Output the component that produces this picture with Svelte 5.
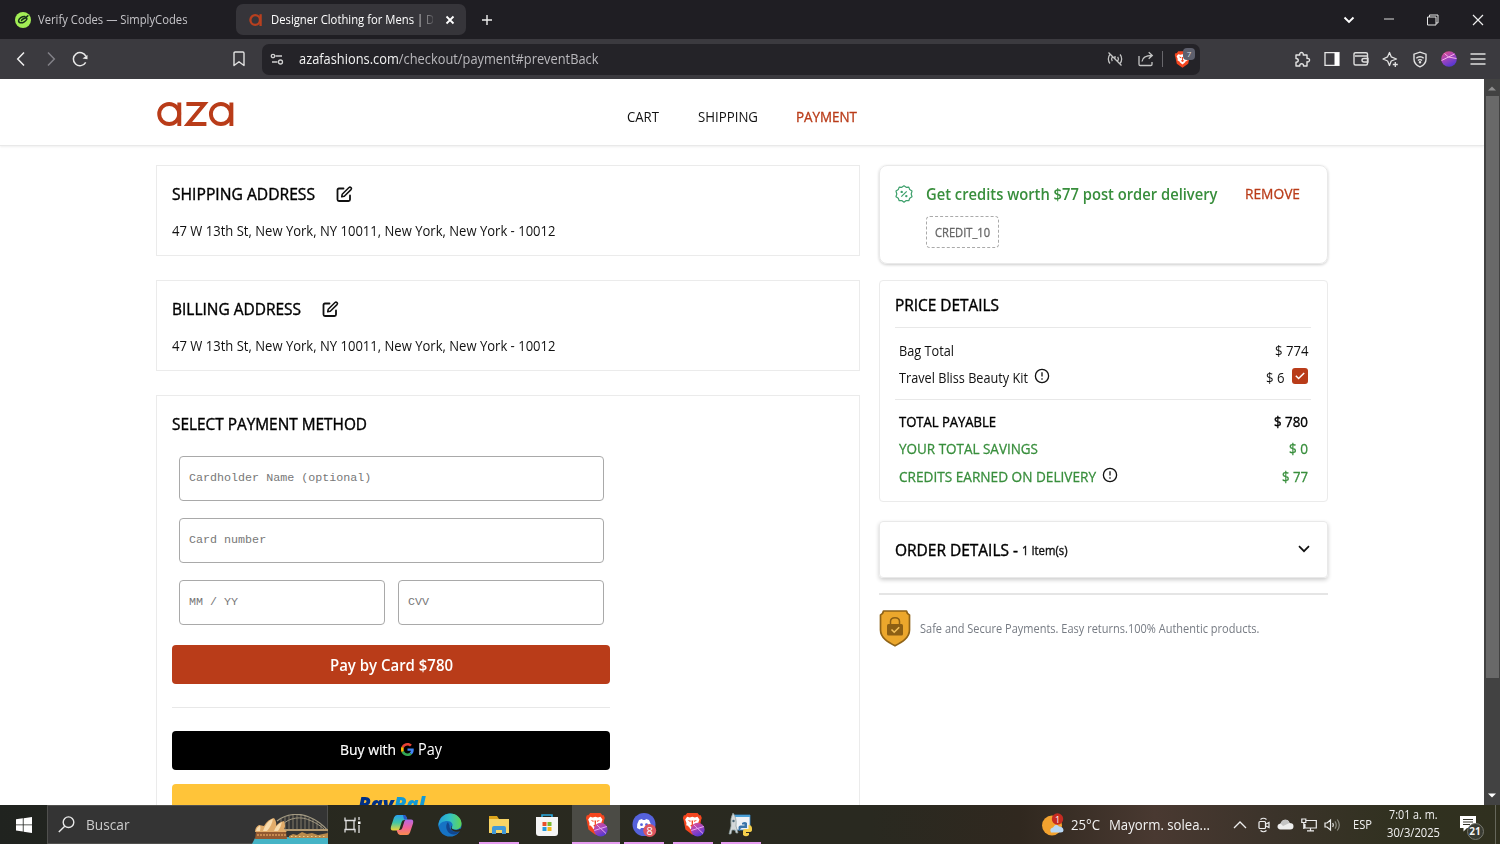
<script>
  // Condenses a label horizontally so that it takes exactly the given width.
  function fit(node, width) {
    node.style.display = 'inline-block';
    const natural = node.getBoundingClientRect().width;
    node.style.width = `${width}px`;
    node.style.transform = `scaleX(${width / natural})`;
  }

  const address = '47 W 13th St, New York, NY 10011, New York, New York - 10012';
  const addresses = [
    { title: 'SHIPPING ADDRESS', width: 143 },
    { title: 'BILLING ADDRESS', width: 129 }
  ];
  const steps = [
    { label: 'CART', width: 32, active: false },
    { label: 'SHIPPING', width: 60, active: false },
    { label: 'PAYMENT', width: 61, active: true }
  ];
  const totals = [
    { label: 'TOTAL PAYABLE', width: 97, value: '$ 780', vw: 34, green: false, info: false },
    { label: 'YOUR TOTAL SAVINGS', width: 139, value: '$ 0', vw: 19, green: true, info: false },
    { label: 'CREDITS EARNED ON DELIVERY', width: 197, value: '$ 77', vw: 26, green: true, info: true }
  ];
</script>

{#snippet info()}
  <svg class="info" width="16" height="16" viewBox="0 0 16 16" fill="none" stroke="#111" stroke-width="1.300">
    <circle cx="8" cy="8" r="6.600" /><path d="M8 4.300v4.300M8 10.200v1.500" />
  </svg>
{/snippet}

{#snippet lion()}
  <path d="M6 1h12l2.200 2.500 1.600-.2 1.200 3-.8 2.200L20 18.500 12 24 4 18.500 1.800 8.500 1 6.300l1.200-3 1.600.2z" fill="#f4461f" />
  <path d="M6 5l3 .7L12 5l3 .7L18 5l2.300 3-1.500 3.500.2 2.500-4 3-3 2.700-3-2.700-4-3 .2-2.500L3.700 8z" fill="#fff" />
  <path d="M6.500 8.300l3.800.8-.8 1.500zM17.500 8.300l-3.800.8.8 1.500zM11 9h2l-.4 4.200 1.900 1.200L12 16l-2.500-1.600 1.900-1.200z" fill="#f4461f" />
  <path d="M5.500 14.500l3 2.200M18.500 14.500l-3 2.200" stroke="#f4461f" stroke-width="1.200" />
{/snippet}

{#snippet braveApp()}
  <svg width="26" height="28" viewBox="0 0 26 28">
    <g transform="translate(2 1) scale(.86 .95)">{@render lion()}</g>
    <circle cx="17.700" cy="18.700" r="6.900" fill="url(#orb)" />
    <path d="M11.300 19.500l12.500-4M14 14l9 8.500" stroke="#e9a9ef" stroke-width="1" />
  </svg>
{/snippet}

<div class="screen">
  <div class="tabs">
    <div class="tab first">
      <svg width="16" height="16" viewBox="0 0 16 16">
        <circle cx="8" cy="8" r="8" fill="#a2ee55" />
        <path d="M9.800 4.400C7 4.200 3.800 6.200 3.600 8.500c-.2 2.700 3 3 5.700 1.300 2.400-1.500 3.300-3.500 1.900-3.700-1.500-.2-4.200 1.100-4.700 2.500M10 6l2.800-2.200" fill="none" stroke="#16301a" stroke-width="1.500" stroke-linecap="round" />
      </svg>
      <span use:fit={149.5}>Verify Codes — SimplyCodes</span>
    </div>
    <div class="tab active">
      <svg width="14" height="14" viewBox="0 0 14 14" fill="none" stroke="#b8401f" stroke-width="2.300">
        <circle cx="6.200" cy="7" r="4.800" /><path d="M11.600 1.200v11.800" />
      </svg>
      <div class="tabtitle"><span use:fit={175}>Designer Clothing for Mens | Des</span></div>
      <svg width="10" height="10" viewBox="0 0 10 10" stroke="#fff" stroke-width="1.800"><path d="M1.500 1.500l7 7M8.500 1.500l-7 7" /></svg>
    </div>
    <svg class="plus" width="12" height="12" viewBox="0 0 12 12" stroke="#eee" stroke-width="1.400"><path d="M6 1v10M1 6h10" /></svg>
    <div class="window">
      <span class="w1"><svg width="12" height="8" viewBox="0 0 12 8" fill="none" stroke="#fff" stroke-width="1.900"><path d="M1.500 1.500L6 6l4.500-4.500" /></svg></span>
      <span><svg width="12" height="12" viewBox="0 0 12 12" stroke="#ddd"><path d="M1 5h10" /></svg></span>
      <span><svg width="12" height="12" viewBox="0 0 12 12" fill="none" stroke="#e6e6e6"><path d="M.5 3h8.500v8H.5zM2.500 3V1h8.500v8H9" /></svg></span>
      <span><svg width="12" height="12" viewBox="0 0 12 12" stroke="#eee" stroke-width="1.200"><path d="M1 1l10 10M11 1L1 11" /></svg></span>
    </div>
  </div>

  <div class="toolbar">
    <div class="nav">
      <svg width="10" height="16" viewBox="0 0 10 16" fill="none" stroke="#eee" stroke-width="1.500"><path d="M8 1.500L1.700 8 8 14.500" /></svg>
      <svg width="10" height="16" viewBox="0 0 10 16" fill="none" stroke="#828187" stroke-width="1.500"><path d="M2 1.500L8.300 8 2 14.500" /></svg>
      <svg width="18" height="18" viewBox="0 0 18 18" fill="none" stroke="#e8e8e8" stroke-width="1.500"><path d="M14.700 12.400A6.600 6.600 0 1 1 15 6.400" /><path d="M16.500 5v4.200l-5-.7z" fill="#e8e8e8" stroke="none" /></svg>
    </div>
    <svg class="mark" width="14" height="16" viewBox="0 0 14 16" fill="none" stroke="#e0e0e0" stroke-width="1.400" stroke-linejoin="round"><path d="M2 2.200q0-1.200 1.200-1.200h7.600Q12 1 12 2.200V14.500L7 10.700 2 14.500z" /></svg>
    <div class="url">
      <svg width="14" height="14" viewBox="0 0 14 14" fill="none" stroke="#d0d0d0" stroke-width="1.300"><circle cx="3" cy="4" r="1.700" /><path d="M5.500 4h6.500M2 10h5.500" /><circle cx="10.500" cy="10" r="2" /></svg>
      <span class="host" use:fit={299.5}>azafashions.com<i>/checkout/payment#preventBack</i></span>
      <svg class="cast" width="16" height="16" viewBox="0 0 16 16" fill="none" stroke="#c4c4c4" stroke-width="1.300"><path d="M1.500 1.500l13 13M3 3.500C.8 6 .8 10 3 12.500M5.300 5.800c-1 1.400-1 3 0 4.400M13 12.500C15.200 10 15.200 6 13 3.500M10.700 10.200c1-1.400 1-3 0-4.400M8 5v3" /></svg>
      <svg class="share" width="16" height="16" viewBox="0 0 16 16" fill="none" stroke="#c4c4c4" stroke-width="1.300"><path d="M1 5v8.300q0 1.200 1.200 1.200h10.600q1.200 0 1.200-1.200V11M4 10.500C4.500 6.500 7 4.500 14 4.500M10.700 1.200L14.300 4.500 10.700 7.800" /></svg>
      <i class="sep"></i>
      <div class="shield">
        <svg width="17" height="19" viewBox="0 0 24 25">{@render lion()}</svg>
        <b>7</b>
      </div>
    </div>
    <div class="ext">
      <span><svg width="17" height="17" viewBox="0 0 17 17" fill="none" stroke="#e2e2e2" stroke-width="1.400" stroke-linejoin="round"><path d="M2 4h3.800c-1-3.300 4.400-3.300 3.400 0H13v3.500c3.400-1 3.400 4.200 0 3.300V15H9.500c.5-3-4.200-3-3.700 0H2v-3.700c3-.2 3-3.600 0-3.800z" /></svg></span>
      <span><svg width="16" height="16" viewBox="0 0 16 16"><path d="M1 1.700h14v12.600H1z" fill="none" stroke="#e8e8e8" stroke-width="1.300" /><path d="M10.500 1.500H15v13h-4.500z" fill="#fff" /></svg></span>
      <span><svg width="16" height="16" viewBox="0 0 16 16" fill="none" stroke="#dedede" stroke-width="1.400"><path d="M14.500 5V3Q14.500 1.700 13 1.700H2.500Q1 1.700 1 3.200V12.500Q1 14 2.500 14H13q1.500 0 1.500-1.500V5H2M15 7.500h-4q-2 0-2 1.700T11 11h4z" /></svg></span>
      <span><svg width="17" height="17" viewBox="0 0 17 17" fill="none" stroke="#e2e2e2" stroke-width="1.300" stroke-linejoin="round"><path d="M7.500 1.500l1.700 4.300L14.500 8 9.200 10l-1.700 4.500L5.600 10 1 8l4.600-2.200zM13.300 11v5M10.800 13.500h5" /></svg></span>
      <span><svg width="16" height="17" viewBox="0 0 16 17" fill="none" stroke="#e2e2e2" stroke-width="1.400"><path d="M8 1.200l6 2v5c0 4-2.700 6.200-6 7.600-3.300-1.400-6-3.600-6-7.600v-5zM4.300 7.300c2-2 5.400-2 7.400 0M6 9.500c1-1.200 3-1.200 4 0" /><circle cx="8" cy="11.300" r=".6" /></svg></span>
      <span><svg width="16" height="16" viewBox="0 0 16 16"><defs><linearGradient id="orb" x1="0" y1="0" x2=".5" y2="1"><stop offset="0" stop-color="#e8507c" /><stop offset=".5" stop-color="#a745bd" /><stop offset="1" stop-color="#5838d0" /></linearGradient></defs><circle cx="8" cy="8" r="7.800" fill="url(#orb)" /><path d="M.5 9.500L13.500 3M3.500 2.500l4 3.500 8 1.500" fill="none" stroke="#f4b2e4" stroke-width="1" /></svg></span>
      <span><svg width="16" height="14" viewBox="0 0 16 14" stroke="#dedede" stroke-width="1.300"><path d="M.5 2h15M.5 7h15M.5 12h15" /></svg></span>
    </div>
  </div>

  <div class="view">
    <div class="page">
      <header>
        <svg class="logo" width="78" height="26" viewBox="0 0 78 26" fill="none" stroke="#b93c19" stroke-width="3.900" role="img" aria-label="aza">
          <circle cx="13.200" cy="13" r="10" /><path d="M23.300 1.500v23.500" />
          <polyline points="30.400,3 48.400,3 31.900,23 50.400,23" />
          <circle cx="64.900" cy="13" r="10" /><path d="M75.400 1.500v23.500" />
        </svg>
        <nav>
          {#each steps as s}<div class:on={s.active}><span use:fit={s.width}>{s.label}</span></div>{/each}
        </nav>
      </header>

      <div class="columns">
        <section class="left">
          {#each addresses as a}
            <div class="card address">
              <h2><span use:fit={a.width}>{a.title}</span>
                <svg width="17" height="17" viewBox="0 0 17 17" fill="none" stroke="#111" stroke-width="1.800" stroke-linejoin="round" stroke-linecap="round"><path d="M7.500 2.500H3Q1.500 2.500 1.500 4v9.500Q1.500 15 3 15h9.500q1.500 0 1.500-1.500V9.500" /><path d="M5.700 10.800l.5-2.600L13 1.500q1-.8 2 .1t0 2L8.300 10.300z" stroke-width="1.500" /></svg>
              </h2>
              <p><span use:fit={383.5}>{address}</span></p>
            </div>
          {/each}

          <div class="card payment">
            <h2><span use:fit={195}>SELECT PAYMENT METHOD</span></h2>
            <div class="fields">
              <div class="field wide"><span>Cardholder Name (optional)</span></div>
              <div class="field wide"><span>Card number</span></div>
              <div class="field"><span>MM / YY</span></div>
              <div class="field"><span>CVV</span></div>
            </div>
            <div class="btn pay"><span use:fit={123}>Pay by Card $780</span></div>
            <hr />
            <div class="btn gpay">
              <span use:fit={56}>Buy with</span>
              <svg width="13" height="13" viewBox="0 0 48 48"><path fill="#ea4335" d="M24 9.500c3.500 0 6.700 1.200 9.200 3.600l6.900-6.900C35.900 2.400 30.500 0 24 0 14.600 0 6.500 5.400 2.600 13.200l8 6.200C12.400 13.700 17.700 9.500 24 9.500z" /><path fill="#4285f4" d="M47 24.600c0-1.600-.2-3.100-.4-4.600H24v9h12.900c-.6 3-2.300 5.500-4.800 7.200l7.700 6C44.400 38 47 31.800 47 24.600z" /><path fill="#fbbc05" d="M10.500 28.600a14.500 14.500 0 0 1 0-9.200l-8-6.200a24 24 0 0 0 0 21.600z" /><path fill="#34a853" d="M24 48c6.500 0 11.900-2.100 15.900-5.800l-7.700-6c-2.200 1.500-4.900 2.300-8.200 2.300-6.300 0-11.600-4.200-13.500-9.900l-8 6.200C6.500 42.600 14.600 48 24 48z" /></svg>
              <span class="gp" use:fit={24}>Pay</span>
            </div>
            <div class="btn paypal"><span use:fit={67}>Pay<i>Pal</i></span></div>
          </div>
        </section>

        <section class="right">
          <div class="credit">
            <svg width="18" height="18" viewBox="0 0 18 18" fill="none" stroke="#3ea06c" stroke-width="1.200" stroke-linejoin="round"><path d="M9 .8l2.200 1.500 2.600-.2.900 2.500 2.300 1.500L16.200 9l.8 2.700-2.300 1.500-.9 2.500-2.600-.2L9 17.200l-2.200-1.700-2.600.2-.9-2.500L1 11.700 1.800 9 1 6.100l2.300-1.500.9-2.500 2.600.2z" /><path d="M6.300 11.700l5.400-5.400" /><circle cx="6.700" cy="6.900" r=".6" /><circle cx="11.300" cy="11.100" r=".6" /></svg>
            <div class="offer">
              <h3><span use:fit={291.5}>Get credits worth $77 post order delivery</span></h3>
              <div class="code"><span use:fit={55}>CREDIT_10</span></div>
            </div>
            <div class="remove"><span use:fit={55}>REMOVE</span></div>
          </div>

          <div class="card prices">
            <h2><span use:fit={104}>PRICE DETAILS</span></h2>
            <hr />
            <div class="row bag"><span use:fit={55}>Bag Total</span><b><span use:fit={33.5}>$ 774</span></b></div>
            <div class="row"><span use:fit={129}>Travel Bliss Beauty Kit</span>{@render info()}<b><span use:fit={18.5}>$ 6</span></b>
              <svg class="check" width="16" height="16" viewBox="0 0 16 16"><rect width="16" height="16" rx="3" fill="#b93c19" /><path d="M3.800 7.800l2.800 2.700 5.600-5.500" fill="none" stroke="#fff" stroke-width="1.500" /></svg>
            </div>
            <hr class="second" />
            {#each totals as t}
              <div class="row strong" class:green={t.green}><span use:fit={t.width}>{t.label}</span>{#if t.info}{@render info()}{/if}<b><span use:fit={t.vw}>{t.value}</span></b></div>
            {/each}
          </div>

          <div class="orders">
            <h2><span use:fit={123}>ORDER DETAILS -</span></h2>
            <small><span use:fit={45.5}>1 Item(s)</span></small>
            <svg width="12" height="8" viewBox="0 0 12 8" fill="none" stroke="#111" stroke-width="1.700"><path d="M1 1.200l5 5 5-5" /></svg>
          </div>

          <div class="safe">
            <svg width="32" height="38" viewBox="0 0 32 38">
              <path d="M4.500 2h23q.5 3 3 4v15c0 8-8 12.500-14.500 15.800C9.500 33.500 1.500 29 1.500 21V6q2.500-1 3-4z" fill="#eca72c" stroke="#8f6318" stroke-width="1.700" stroke-linejoin="round" />
              <rect x="8" y="15" width="16" height="11.500" rx="1.500" fill="#8d5f14" />
              <path d="M11.500 15v-2.500c0-5 9-5 9 0V15" fill="none" stroke="#8d5f14" stroke-width="1.500" />
              <path d="M12.500 20.500l2.700 2.700 5-5" fill="none" stroke="#f5c15b" stroke-width="1.600" />
            </svg>
            <span use:fit={339.5}>Safe and Secure Payments. Easy returns.100% Authentic products.</span>
          </div>
        </section>
      </div>
    </div>
    <div class="scroll">
      <svg width="8" height="5" viewBox="0 0 8 5"><path d="M0 4.500h8L4 .5z" fill="#8d8d8d" /></svg>
      <i></i>
      <svg class="down" width="8" height="5" viewBox="0 0 8 5"><path d="M0 .5h8L4 4.500z" fill="#fff" /></svg>
    </div>
  </div>

  <div class="taskbar">
    <div class="start"><svg width="16" height="16" viewBox="0 0 16 16" fill="#fff"><path d="M0 2.300L6.800 1.300v6.200H0zM7.600 1.200L16 0v7.500H7.600zM0 8.300h6.800v6.300L0 13.600zM7.600 8.300H16V16l-8.400-1.200z" /></svg></div>
    <div class="search">
      <svg width="17" height="17" viewBox="0 0 17 17" fill="none" stroke="#e8e8e8" stroke-width="1.400"><circle cx="10.500" cy="6.200" r="5.300" /><path d="M6.700 10.200L.8 16" /></svg>
      <span class="hint" use:fit={43.5}>Buscar</span>
      <svg class="opera" width="77" height="30" viewBox="0 0 77 30">
        <path d="M1 30l3-6q38-2 73 0v6z" fill="#45b4c6" />
        <g fill="none" stroke="#a39a83"><path d="M26 7C36-1 50-1 58 3 68 7 73 12 77 17" stroke-width="1.200" /><path d="M28 16C34 3 50 2 58 6 66 9 71 13 75 17" stroke-width="1" /><path d="M30 16h47" stroke-width="2" stroke="#b59a70" /><path d="M30 5v11M34 3v13M38 2v14M42 1v15M46 1v15M50 1v15M54 2v14M58 4v12M62 5v11M66 8v8M70 11v5" stroke-width=".7" /></g>
        <path d="M38 22l4-2 4 1 5-3 5 2 5-1 6 2 10-2v5H38z" fill="#b88a4c" />
        <path d="M40 22.500h36" stroke="#efd08a" stroke-dasharray="1.500 2.500" />
        <path d="M4 25l1-7h30l1 7z" fill="#935a32" />
        <path d="M4 18q0-5 4-7l5 1Q17 5 23 4q3 4 2 8 3-4 8-5 2 5 0 8l3 3z" fill="#e2ac6a" />
        <path d="M12 17q3-9 10-12.500-1 7-6 12.500M23 17q2-6 8-9-1 5-4 9M5 17q1-4 4-5.500 1 3 0 5.500" fill="#f8dcae" />
        <path d="M6 21h29" stroke="#d99b5b" stroke-dasharray="2 1" stroke-width="1.500" />
      </svg>
    </div>
    <div class="apps">
      <span><svg width="18" height="16" viewBox="0 0 18 16" fill="none" stroke="#e0e0e0" stroke-width="1.300"><path d="M1 .5v3h10v-3M1 15.500v-3h10v3M2 3.500v9M10 3.500v9M15 0v3M15 8v8" /><path d="M14 4.500h2.500V7H14z" fill="#fff" stroke="none" /></svg></span>
      <span>
        <svg width="24" height="22" viewBox="0 0 24 22"><defs><linearGradient id="c1" x1="0" y1="0" x2="0" y2="1"><stop offset="0" stop-color="#299ff0" /><stop offset=".5" stop-color="#42c7a4" /><stop offset="1" stop-color="#f2d333" /></linearGradient><linearGradient id="c2" x1="0" y1="0" x2="0" y2="1"><stop offset="0" stop-color="#b369e8" /><stop offset=".5" stop-color="#f0639c" /><stop offset="1" stop-color="#f98b4b" /></linearGradient></defs>
          <path d="M7 1h7q2 0 2.800 3l.5 2h-3q-2 0-2.600 2L9.500 15q-.5 1.500-2.500 1.500H3Q0 16.500 1 12.500L4 3.500Q5 1 7 1z" fill="url(#c1)" /><path d="M17 21h-7q-2 0-2.800-3l-.5-2h3q2 0 2.600-2L14.500 7q.5-1.500 2.500-1.500h4q3 0 2 4l-3 9Q19 21 17 21z" fill="url(#c2)" /><path d="M13 1h1.500q1.700.3 2.500 3l.4 1.500H14z" fill="#2858c9" /></svg></span>
      <span><svg width="24" height="24" viewBox="0 0 24 24"><defs><linearGradient id="e1" x1="0" x2="1"><stop offset="0" stop-color="#249fd9" /><stop offset=".5" stop-color="#33c2c4" /><stop offset="1" stop-color="#62d552" /></linearGradient></defs><circle cx="12" cy="12" r="11.500" fill="#1673c4" /><path d="M.5 11C2 4 7 .5 12 .5c7 0 11.500 5 11.500 10 0 4-3 6-6.500 6-2.500 0-4-1-3-2.500 2-3-1-6-4.500-6C5 8 1.500 10 .5 14z" fill="url(#e1)" /><path d="M10 9c-3 3-2 9 2 11.500 4 2 8 .5 10.300-2.300C18 20 11 18 11.500 12.500z" fill="#12468e" /><path d="M13.500 12.500c1 1-1 2 1 3.500 3 1.500 6 1 8-.5l1 2-2 1c-5 1-9-1-8.500-4z" fill="#29291f" /></svg></span>
      <span class="open"><svg width="22" height="20" viewBox="0 0 22 20"><path d="M1 1h8l2 3h10v14H1z" fill="#dda51c" /><path d="M1 4h20v14H1z" fill="#f8d566" /><path d="M4 19v-6q0-2 2-2h10q2 0 2 2v6h-4v-4H8v4z" fill="#4299d8" /></svg></span>
      <span><svg width="24" height="24" viewBox="0 0 24 24"><path d="M7 5V2h10v3" fill="none" stroke="#29a8de" stroke-width="1.600" /><path d="M1 4h22v16q0 3-3 3H4q-3 0-3-3z" fill="#f5f5f5" /><path d="M7.500 9h4v4h-4z" fill="#e8502b" /><path d="M12.500 9h4v4h-4z" fill="#7bb82e" /><path d="M7.500 14h4v4h-4z" fill="#2699dd" /><path d="M12.500 14h4v4h-4z" fill="#f4b719" /></svg></span>
      <span class="open current">{@render braveApp()}</span>
      <span class="open"><svg width="26" height="26" viewBox="0 0 26 26"><circle cx="13" cy="12.500" r="11.500" fill="#5562dc" /><path d="M8 8l3-1 .8 1h2.400l.8-1 3 1q2.500 4 2 8L17 17.500l-1-1.500h-6l-1 1.500L6 16Q5.500 12 8 8z" fill="#fff" /><circle cx="10.500" cy="12.700" r="1.400" fill="#5562dc" /><circle cx="15.500" cy="12.700" r="1.400" fill="#5562dc" /><circle cx="18.700" cy="18.500" r="6.500" fill="#dc5560" /><text x="18.700" y="22.500" text-anchor="middle" font-size="11" fill="#fff">8</text></svg></span>
      <span class="open">{@render braveApp()}</span>
      <span class="open"><svg width="26" height="26" viewBox="0 0 26 26"><path d="M6 3h16v15H6z" fill="#eef1f5" stroke="#378ccb" stroke-width=".8" /><path d="M6 3h16v2H6z" fill="#4aa0d8" /><path d="M5 1q4 5 3 13l2 7H8l-1-3H4l-1 4H1l2-8Q2 6 5 1z" fill="#d3d7d9" stroke="#899" stroke-width=".7" /><circle cx="5.500" cy="9" r="1.200" fill="#4a6575" /><path d="M14 11q3-2 5 0v5h-5q-2 0-2 3-2-1-1.500-4 .5-1.500 2-1.500h4V12.500h-2.500z" fill="#3974aa" /><path d="M20.500 13q4 0 3.500 5 0 2-3 2h-3v1h3v2q-3 2.500-6 0v-4q0-2 2-2h3.500z" fill="#f4cf4b" /></svg></span>
    </div>
    <div class="weather">
      <svg width="24" height="24" viewBox="0 0 24 24"><circle cx="11" cy="12.500" r="10" fill="#f3a22f" /><path d="M10 19.500q-2-4 2-5 3-5 6-1 4 0 4.500 3.500 0 2.500-3 2.500z" fill="#b9d8f6" /><circle cx="16.500" cy="6" r="5.700" fill="#c42b22" /><text x="16.500" y="9.500" text-anchor="middle" font-size="9" fill="#fff">1</text></svg>
      <span use:fit={29}>25°C</span><span class="sky" use:fit={101}>Mayorm. solea...</span>
    </div>
    <div class="tray">
      <svg width="14" height="8" viewBox="0 0 14 8" fill="none" stroke="#eee" stroke-width="1.300"><path d="M1 7l6-6 6 6" /></svg>
      <svg class="cam" width="12" height="16" viewBox="0 0 12 16" fill="none" stroke="#eee" stroke-width="1.200"><rect x="1" y="4.500" width="6.500" height="7" rx="1" /><path d="M8 7l3-1.500v5L8 9M2.500 2.500q3-2.500 6 0M2.500 13.500q3 2.500 6 0" /></svg>
      <svg width="17" height="11" viewBox="0 0 17 11"><path d="M3.500 10.500Q.5 10 .5 7.500T3.500 4.500Q5 .5 8.500.7T12.500 4Q16.500 4 16.500 7.300T13 10.500z" fill="#eee" /><path d="M3.500 4.500Q5 .5 8.500.7T12.500 4L6 7z" fill="#c4c4c4" /></svg>
      <svg width="16" height="14" viewBox="0 0 16 14" fill="none" stroke="#eee" stroke-width="1.200"><path d="M5 2.500h10.300V10H4V6M9.500 10v2.500M6 12.800h7M.8 1h4v3.500h-4zM2.800 4.500V11" /></svg>
      <svg width="17" height="14" viewBox="0 0 17 14" fill="none" stroke="#eee" stroke-width="1.200"><path d="M1 5h2l3.500-3v10L3 9H1zM8.700 5q1.300 2 0 4" /><path d="M11 3.300q2.500 3.700 0 7.400M13.300 1.500q4 5.500 0 11" stroke="#8c8c82" /></svg>
    </div>
    <div class="lang"><span use:fit={19}>ESP</span></div>
    <div class="clock"><span use:fit={48.5}>7:01 a. m.</span><span use:fit={53}>30/3/2025</span></div>
    <div class="notes">
      <svg width="16" height="16" viewBox="0 0 16 16"><path d="M0 0h16v12H7l-3.500 3.500V12H0z" fill="#fff" /><path d="M3 3.500h10M3 6h10M3 8.500h7" stroke="#35352b" /></svg>
      <b>21</b>
    </div>
  </div>
</div>

<style>
  :global(body) { margin: 0; background: #fff; overflow: hidden; }
  .screen, .screen :global(*) { box-sizing: border-box; }
  .screen { width: 1500px; height: 844px; overflow: hidden; display: flex; flex-direction: column; font-family: 'Open Sans', 'Noto Sans', sans-serif; font-size: 14.700px; color: #111; white-space: nowrap; }
  svg { display: block; flex: none; }
  span { white-space: pre; transform-origin: 0 50%; }
  h2, h3, p { margin: 0; }
  i { font-style: normal; }

  .tabs { height: 39px; flex: none; background: #1f1e23; display: flex; align-items: center; font-size: 12.800px; color: #c5c4c8; }
  .tab { display: flex; align-items: center; height: 31px; }
  .tab span { margin-top: -2px; }
  .first { width: 236px; padding-left: 15px; gap: 7px; }
  .active { width: 230px; background: #36353a; border-radius: 7px; padding-left: 13px; color: #fff; }
  .tabtitle { display: flex; width: 162px; margin: 0 12px 0 8px; overflow: hidden; -webkit-mask-image: linear-gradient(90deg, #000 88%, transparent 102%); mask-image: linear-gradient(90deg, #000 88%, transparent 102%); }
  .tabtitle span { flex: none; }
  .plus { margin-left: 15px; }
  .window { margin-left: auto; display: flex; }
  .window span { width: 44.500px; display: flex; justify-content: center; align-items: center; }
  .window .w1 { width: 35px; }

  .toolbar { height: 40px; flex: none; background: #3b3a3f; display: flex; align-items: center; }
  .nav { display: flex; align-items: center; padding-left: 16px; gap: 20px; width: 232px; }
  .nav svg:last-child { margin-left: -5px; }
  .url { margin-left: 16px; width: 938px; height: 31px; border-radius: 7px; background: #242328; display: flex; align-items: center; padding-left: 8px; }
  .host { margin: -2px 0 0 14.500px; font-size: 14.700px; color: #f2f2f2; }
  .host i { color: #b9b8bc; }
  .cast { margin-left: auto; }
  .share { margin-left: 15.500px; }
  .sep { width: 1px; height: 16px; background: #68676c; margin: 0 11px 0 8px; }
  .shield { position: relative; width: 26px; }
  .shield b { position: absolute; left: 9px; top: -2px; width: 12px; height: 12px; border-radius: 4px; background: #5e606d; color: #ddd; font-size: 8px; line-height: 12px; font-weight: 400; text-align: center; }
  .ext { margin-left: auto; display: flex; padding-right: 7px; }
  .ext span { width: 29.350px; display: flex; justify-content: center; align-items: center; }

  .view { height: 726px; flex: none; display: flex; overflow: hidden; }
  .page { width: 1484px; }
  header { height: 67px; border-bottom: 1px solid #e9e9e9; box-shadow: 0 1px 2px #0001; display: flex; align-items: center; padding-left: 156px; }
  .logo { margin-top: 3px; }
  nav { display: flex; gap: 38.500px; margin: 8px 0 0 393px; }
  .on { color: #b93c19; -webkit-text-stroke: .35px currentColor; }
  .columns { display: flex; gap: 19px; padding: 19px 0 0 156px; }
  .left { width: 704px; }
  .right { width: 449px; }
  .card { border: 1px solid #ebebeb; }
  h2 { font-size: 15.800px; height: 21px; margin-bottom: -1px; line-height: 21px; font-weight: 400; -webkit-text-stroke: .4px currentColor; color: #000; display: flex; align-items: center; }
  .address { height: 91px; margin-bottom: 24px; padding: 18px 15px 0; }
  .address h2 svg { margin: -1px 0 0 21px; }
  .address p { margin-top: 16px; line-height: 20px; }

  .payment { height: 460px; padding: 18px 15px 0; }
  .fields { display: grid; grid-template-columns: 1fr 1fr; gap: 17px 13px; width: 425px; margin: 22px 0 0 7px; }
  .field { height: 45px; border: 1px solid #a9a9a9; border-radius: 4px; padding: 0 0 1px 9px; display: flex; align-items: center; color: #777; font: 11.700px 'Liberation Mono', monospace; }
  .wide { grid-column: span 2; }
  .btn { width: 438px; height: 39px; border-radius: 4px; display: flex; align-items: center; justify-content: center; color: #fff; }
  .pay { background: #b93c19; margin-top: 20px; font-size: 15.800px; font-weight: 600; }
  hr { border: 0; height: 1px; background: #e8e8e8; margin: 0; }
  .payment hr { width: 438px; margin: 23px 0; }
  .gpay { background: #000; font-size: 14.500px; padding-bottom: 3px; -webkit-text-stroke: .2px currentColor; }
  .gpay svg { margin: 0 4px 0 5px; }
  .gp { font-size: 16px; -webkit-text-stroke: 0; }
  .paypal { background: #ffc439; margin-top: 14px; align-items: flex-start; padding-top: 8px; font: italic 800 19px/24px 'Open Sans', sans-serif; color: #003087; }
  .paypal i { color: #139ad6; font-style: italic; }

  .credit { height: 99px; border: 1px solid #e9e9e9; border-radius: 8px; box-shadow: 0 1px 3px #0003; display: flex; padding: 18px 0 0 15px; }
  .credit > svg { margin-top: 1px; }
  .offer { margin-left: 13px; width: 319px; }
  h3 { font-size: 15.800px; font-weight: 600; line-height: 21px; height: 20px; color: #388e3c; }
  .code { width: 73px; height: 32px; margin-top: 12px; border: 1px dashed #aaa; border-radius: 4px; display: flex; align-items: center; justify-content: center; font-size: 12.600px; color: #666; -webkit-text-stroke: .3px currentColor; }
  .remove { color: #b93c19; line-height: 18px; -webkit-text-stroke: .3px currentColor; }
  .prices { height: 222px; margin-top: 16px; border-radius: 4px; padding: 14px 16px 0 15px; }
  .prices hr { margin-top: 13px; }
  .prices h2 { margin-bottom: -1px; }
  .prices hr:not(.second) { margin-top: 12px; }
  .row { height: 27.300px; display: flex; align-items: center; padding: 0 3px 0 4px; }
  .row span { margin-top: -1px; }
  .bag { margin-top: 9px; }
  .row b { display: flex; margin-left: auto; font-weight: inherit; }
  .info { margin: -3px 0 0 6px; }
  .check { margin: -4px 0 0 8px; }
  .prices .second { margin: 7px 0 8.300px; }
  .strong { -webkit-text-stroke: .4px currentColor; color: #000; }
  .green { color: #388e3c; -webkit-text-stroke-width: .3px; }
  .orders { margin-top: 19px; height: 57px; border: 1px solid #e9e9e9; border-radius: 4px; box-shadow: 0 2px 4px #0003; display: flex; align-items: center; padding: 0 17px 0 15px; }
  .orders small { margin: 2px 0 0 4px; font-size: 12.500px; font-weight: 400; -webkit-text-stroke: .4px currentColor; }
  .orders svg { margin: -2px 0 0 auto; }
  .safe { margin-top: 15px; border-top: 2px solid #e5e5e5; padding-top: 14px; display: flex; align-items: center; gap: 9px; font-size: 12.600px; color: #767b83; }

  .scroll { width: 16px; background: #424242; display: flex; flex-direction: column; align-items: center; padding-top: 7px; }
  .scroll i { width: 13px; height: 582px; margin-top: 5px; background: #696969; }
  .down { margin: auto 0 7px; }

  .taskbar { height: 39px; flex: none; display: flex; background: linear-gradient(90deg, #20231f 0, #29291f 24%, #292920 58%, #30281f 68%, #493931 77%, #3b332a 85%, #30311f 94%, #30301f); color: #f2f2f2; }
  .start { width: 47px; display: flex; justify-content: center; align-items: center; }
  .search { width: 281px; background: #343434; border: 1px solid #50504e; display: flex; align-items: center; padding-left: 10px; gap: 11px; color: #ccc; }
  .hint { margin-top: -2px; }
  .opera { margin: auto -1px -1px auto; }
  .apps { display: flex; padding-left: 1px; }
  .apps > span { width: 48.500px; display: flex; align-items: center; justify-content: center; }
  .apps span.open { background: linear-gradient(#e59cf0, #e59cf0) 50% 100% / 40px 2.500px no-repeat; }
  .apps span.current { background: linear-gradient(#e59cf0, #e59cf0) 50% 100% / 48px 2.500px no-repeat #4b4b45; }
  .weather { margin-left: 275px; width: 192px; display: flex; align-items: center; }
  .weather span { margin-top: -2px; }
  .weather span:first-of-type { margin-left: 6px; }
  .sky { margin-left: 9px; }
  .tray { display: flex; align-items: center; gap: 7px; width: 120px; }
  .cam { margin-left: 4px; }
  .lang { display: flex; align-items: center; width: 34px; font-size: 12.600px; }
  .clock { width: 54px; font-size: 12.600px; display: flex; flex-direction: column; align-items: center; justify-content: center; line-height: 18px; padding-bottom: 1px; }
  .notes { position: relative; padding: 11px 0 0 19px; width: 55px; border-right: 1px solid #66675b; }
  .notes b { position: absolute; left: 26px; top: 18px; width: 17px; height: 17px; border-radius: 50%; background: #393b32; border: 1px solid #77786f; font-size: 10px; line-height: 15px; text-align: center; }
</style>
